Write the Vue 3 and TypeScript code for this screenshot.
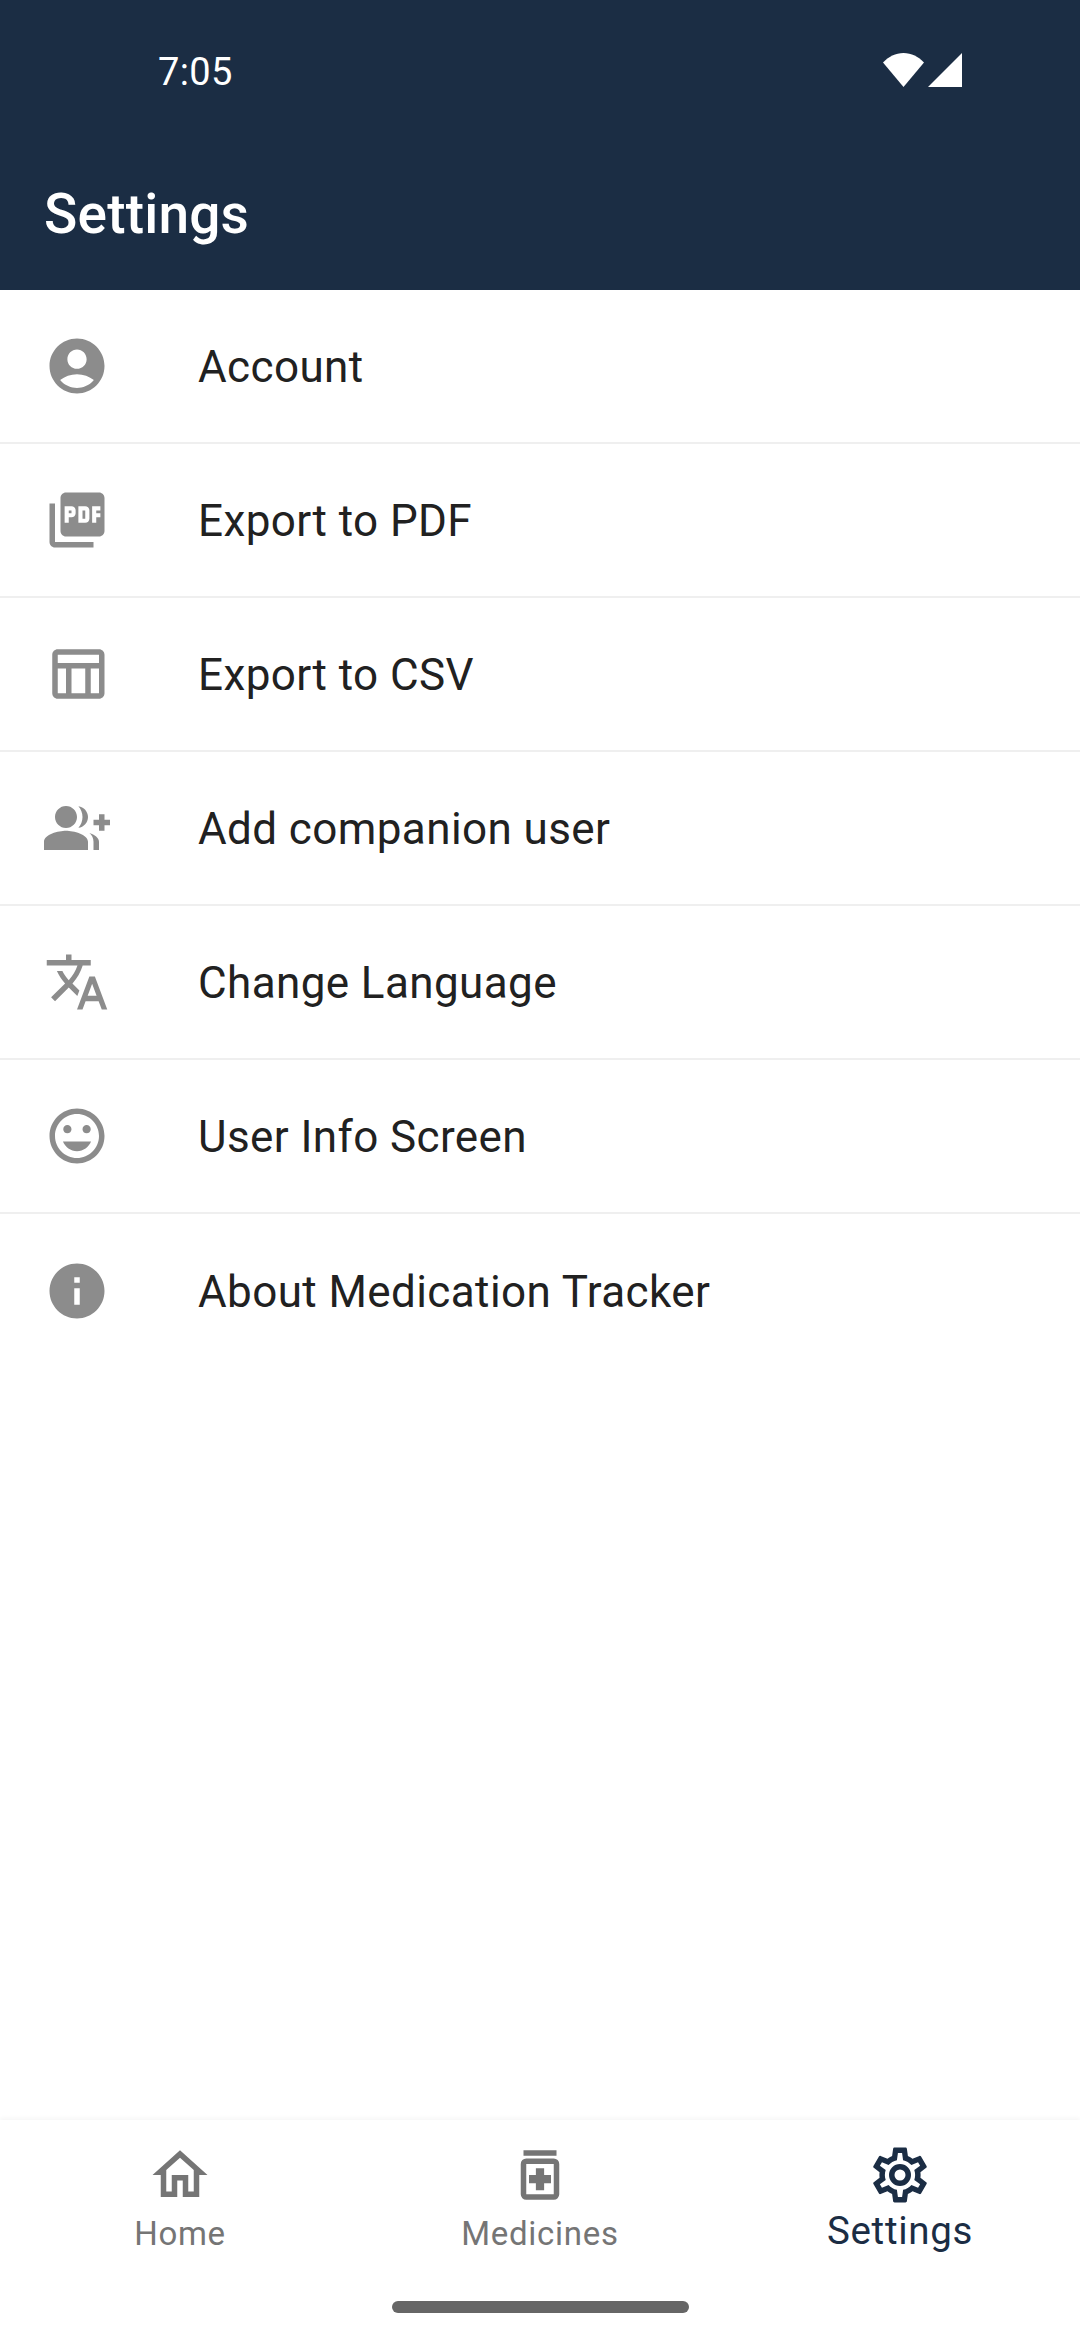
<script setup lang="ts">
interface Row { label: string; d: string }
const rows: Row[] = [
  { label: 'Account', d: 'M12 2C6.48 2 2 6.48 2 12s4.48 10 10 10 10-4.48 10-10S17.52 2 12 2zm0 4c1.93 0 3.5 1.57 3.5 3.5S13.93 13 12 13s-3.5-1.57-3.5-3.5S10.07 6 12 6zm0 14c-2.03 0-4.43-.82-6.14-2.88C7.55 15.8 9.68 15 12 15s4.45.8 6.14 2.12C16.43 19.18 14.03 20 12 20z' },
  { label: 'Export to PDF', d: 'M20 2H8c-1.1 0-2 .9-2 2v12c0 1.1.9 2 2 2h12c1.1 0 2-.9 2-2V4c0-1.1-.9-2-2-2zm-8.5 7.5c0 .83-.67 1.5-1.5 1.5H9v2H7.5V7H10c.83 0 1.5.67 1.5 1.5v1zm5 2c0 .83-.67 1.5-1.5 1.5h-2.5V7H15c.83 0 1.5.67 1.5 1.5v3zm4-3H19v1h1.5V11H19v2h-1.5V7h3v1.5zM9 9.5h1v-1H9v1zM4 6H2v14c0 1.1.9 2 2 2h14v-2H4V6zm10 5.5h1v-3h-1v3z' },
  { label: 'Export to CSV', d: 'M20 3H5c-1.1 0-2 .9-2 2v14c0 1.1.9 2 2 2h15c1.1 0 2-.9 2-2V5c0-1.1-.9-2-2-2zm0 2v3H5V5h15zm-5 14h-5V10h5v9zM5 10h3v9H5v-9zm12 9v-9h3v9h-3z' },
  { label: 'Add companion user', d: 'M22 9V7h-2v2h-2v2h2v2h2v-2h2V9h-2zM8 12c2.21 0 4-1.79 4-4s-1.79-4-4-4-4 1.79-4 4 1.79 4 4 4zm0 1c-2.67 0-8 1.34-8 4v3h16v-3c0-2.66-5.33-4-8-4zm4.51-8.95C13.43 5.11 14 6.49 14 8s-.57 2.89-1.49 3.95C14.47 11.7 16 10.04 16 8s-1.53-3.7-3.49-3.95zm4.02 9.78C17.42 14.66 18 15.7 18 17v3h2v-3c0-1.45-1.59-2.51-3.47-3.17z' },
  { label: 'Change Language', d: 'M12.87 15.07l-2.54-2.51.03-.03c1.74-1.94 2.98-4.17 3.71-6.53H17V4h-7V2H8v2H1v1.99h11.17C11.5 7.92 10.44 9.75 9 11.35 8.07 10.32 7.3 9.19 6.69 8h-2c.73 1.63 1.73 3.17 2.98 4.56l-5.09 5.02L4 19l5-5 3.11 3.11.76-2.04zM18.5 10h-2L12 22h2l1.12-3h4.75L21 22h2l-4.5-12zm-2.62 7l1.62-4.33L19.12 17h-3.24z' },
  { label: 'User Info Screen', d: 'M11.99 2C6.47 2 2 6.48 2 12s4.47 10 9.99 10C17.52 22 22 17.52 22 12S17.52 2 11.99 2zM12 20c-4.42 0-8-3.58-8-8s3.58-8 8-8 8 3.58 8 8-3.58 8-8 8zm3.5-9c.83 0 1.5-.67 1.5-1.5S16.33 8 15.5 8 14 8.67 14 9.5s.67 1.5 1.5 1.5zm-7 0c.83 0 1.5-.67 1.5-1.5S9.33 8 8.5 8 7 8.67 7 9.5 7.67 11 8.5 11zm3.5 6.500c2.33 0 4.31-1.46 5.11-3.5H6.89c.8 2.04 2.78 3.5 5.11 3.5z' },
  { label: 'About Medication Tracker', d: 'M12 2C6.48 2 2 6.48 2 12s4.48 10 10 10 10-4.48 10-10S17.52 2 12 2zm1 15h-2v-6h2v6zm0-8h-2V7h2v2z' },
]
interface Tab { label: string; d: string; active: boolean }
const tabs: Tab[] = [
  { label: 'Home', active: false, d: 'M12 5.69L17 10.19V18H15V12H9V18H7V10.19L12 5.69M12 3L2 12H5V20H11V14H13V20H19V12H22L12 3Z' },
  { label: 'Medicines', active: false, d: 'M6 3h12v2H6z M7 6h10a2 2 0 0 1 2 2v11a2 2 0 0 1-2 2H7a2 2 0 0 1-2-2V8a2 2 0 0 1 2-2z M7 8v11h10V8z M10.5 9.5h3V12H16v3h-2.5v2.5h-3V15H8v-3h2.5z' },
  { label: 'Settings', active: true, d: 'M12,8A4,4 0 0,1 16,12A4,4 0 0,1 12,16A4,4 0 0,1 8,12A4,4 0 0,1 12,8M12,10A2,2 0 0,0 10,12A2,2 0 0,0 12,14A2,2 0 0,0 14,12A2,2 0 0,0 12,10M10,22C9.75,22 9.54,21.82 9.5,21.58L9.13,18.93C8.5,18.68 7.96,18.34 7.44,17.94L4.95,18.95C4.73,19.03 4.46,18.95 4.34,18.73L2.34,15.27C2.21,15.05 2.27,14.78 2.46,14.63L4.57,12.97L4.5,12L4.57,11L2.46,9.37C2.27,9.22 2.21,8.95 2.34,8.73L4.34,5.27C4.46,5.05 4.73,4.96 4.95,5.05L7.44,6.05C7.96,5.66 8.5,5.32 9.13,5.07L9.5,2.42C9.54,2.18 9.75,2 10,2H14C14.25,2 14.46,2.18 14.5,2.42L14.87,5.07C15.5,5.32 16.04,5.66 16.56,6.05L19.05,5.05C19.27,4.96 19.54,5.05 19.66,5.27L21.66,8.73C21.79,8.95 21.73,9.22 21.54,9.37L19.43,11L19.5,12L19.43,13L21.54,14.63C21.73,14.78 21.79,15.05 21.66,15.27L19.66,18.73C19.54,18.95 19.27,19.04 19.05,18.95L16.56,17.95C16.04,18.34 15.5,18.68 14.87,18.93L14.5,21.58C14.46,21.82 14.25,22 14,22H10M11.25,4L10.88,6.61C9.68,6.86 8.62,7.5 7.85,8.39L5.44,7.35L4.69,8.65L6.8,10.2C6.4,11.37 6.4,12.64 6.8,13.8L4.68,15.36L5.43,16.66L7.86,15.62C8.63,16.5 9.68,17.14 10.87,17.38L11.24,20H12.76L13.13,17.39C14.32,17.14 15.37,16.5 16.14,15.62L18.57,16.66L19.32,15.36L17.2,13.81C17.6,12.64 17.6,11.37 17.2,10.2L19.31,8.65L18.56,7.35L16.15,8.39C15.38,7.5 14.32,6.86 13.12,6.62L12.75,4H11.25Z' },
]
</script>

<template>
  <div class="screen">
    <header class="header">
      <div class="status">
        <span class="time">7:05</span>
        <div class="status-icons">
          <svg class="wifi" width="41" height="34" viewBox="0 0 41 34"><path d="M0 9.5C5.5 3.6 12.6 0 20.5 0S35.500 3.600 41 9.500L20.500 34Z" fill="#fff" /></svg>
          <svg class="signal" width="34" height="34" viewBox="0 0 34 34"><path d="M34 0V34H0Z" fill="#fff" /></svg>
        </div>
      </div>
      <h1 class="title">Settings</h1>
    </header>
    <main class="list">
      <div v-for="(row, i) in rows" :key="row.label" class="row" :class="{ last: i === rows.length - 1 }">
        <svg class="row-icon" width="66" height="66" viewBox="0 0 24 24"><path :d="row.d" fill="#8c8c8c" /></svg>
        <span class="row-label">{{ row.label }}</span>
      </div>
    </main>
    <nav class="tabbar">
      <div class="tabs">
        <div v-for="tab in tabs" :key="tab.label" class="tab" :class="{ active: tab.active }">
          <svg width="66" height="66" viewBox="0 0 24 24"><path :d="tab.d" fill="currentColor" fill-rule="evenodd" /></svg>
          <span class="tab-label">{{ tab.label }}</span>
        </div>
      </div>
      <div class="home-bar-wrap"><div class="home-bar"></div></div>
    </nav>
  </div>
</template>

<style>
html, body { margin: 0; background: #fff; }
</style>

<style scoped>
.screen {
  width: 1080px;
  height: 2340px;
  display: flex;
  flex-direction: column;
  background: #fff;
  font-family: Roboto, "Noto Sans", sans-serif;
  overflow: hidden;
}
.header {
  height: 290px;
  box-sizing: border-box;
  background: #1b2d44;
  color: #fff;
  flex: none;
}
.status {
  height: 182px;
  box-sizing: border-box;
  padding: 53px 118px 0 158px;
  display: flex;
  justify-content: space-between;
  align-items: flex-start;
}
.time {
  font-size: 38px;
  line-height: 38px;
  letter-spacing: 0.4px;
}
.status-icons {
  display: flex;
  gap: 4px;
}
.title {
  margin: 0;
  padding-left: 44px;
  font-size: 55px;
  line-height: 64px;
  font-weight: 500;
  letter-spacing: 0.2px;
}
.list {
  flex: 1;
  min-height: 0;
}
.row {
  height: 154px;
  box-sizing: border-box;
  display: flex;
  align-items: center;
  padding-left: 44px;
  border-bottom: 2px solid #efefef;
}
.row.last { border-bottom: none; }
.row-icon { flex: none; }
.row-label {
  margin-left: 88px;
  font-size: 44px;
  color: #212121;
  letter-spacing: 0.4px;
  padding-top: 1px;
}
.tabbar {
  flex: none;
  height: 220px;
  box-sizing: border-box;
  background: #fff;
  box-shadow: 0 -2px 4px rgba(0, 0, 0, 0.04);
  display: flex;
  flex-direction: column;
}
.tabs {
  flex: 1;
  display: flex;
  padding: 22px 0 0;
}
.tab {
  flex: 1;
  display: flex;
  flex-direction: column;
  align-items: center;
  color: #757575;
}
.tab.active { color: #1b2d44; }
.tab-label {
  font-size: 33px;
  line-height: 40px;
  letter-spacing: 0.7px;
  margin-top: 6px;
}
.tab.active .tab-label {
  font-size: 38.5px;
  line-height: 44px;
  margin-top: 1px;
}
.home-bar-wrap {
  height: 39px;
  display: flex;
  justify-content: center;
}
.home-bar {
  width: 297px;
  height: 12px;
  border-radius: 6px;
  background: #666;
}
</style>
